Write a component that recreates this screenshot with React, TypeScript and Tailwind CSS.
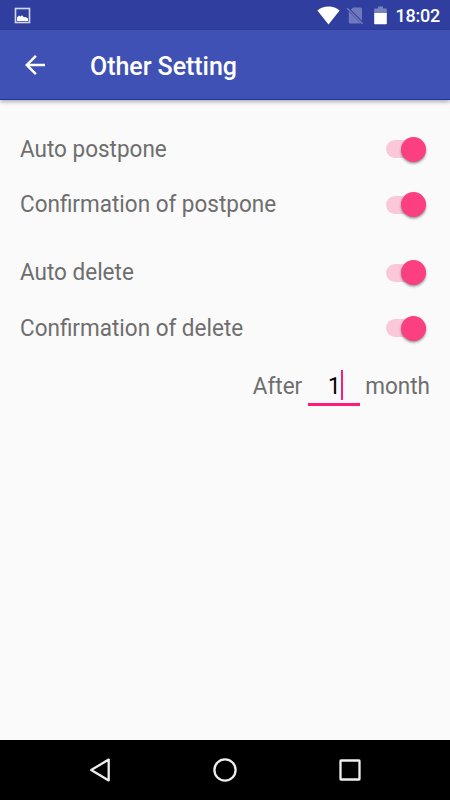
import clsx from 'clsx';

type Setting = { label: string; checked: boolean };

const postponeSettings: Setting[] = [
  { label: 'Auto postpone', checked: true },
  { label: 'Confirmation of postpone', checked: true },
];

const deleteSettings: Setting[] = [
  { label: 'Auto delete', checked: true },
  { label: 'Confirmation of delete', checked: true },
];

function StatusBar() {
  return (
    <div className="flex h-[30px] shrink-0 items-center bg-[#303f9f] pr-[10px] pl-[14px] text-white">
      <svg width="17" height="17" viewBox="0 0 17 17">
        <rect x="1.5" y="1.5" width="14" height="14" fill="none" stroke="#d3d7ee" strokeWidth="1.6" />
        <path d="M3 14v-3.500l2-2 1.500 1 1.500-1.300 2 2 1.500-.3 2.500 1.600V14z" fill="#fff" />
      </svg>
      <svg className="ml-auto" width="23" height="19" viewBox="0 0 23 19">
        <path d="M11.5 18.5L.4 4.6C3.3 2 7.2.5 11.5.5s8.2 1.5 11.1 4.1z" fill="#fff" />
      </svg>
      {/* No SIM card */}
      <svg className="ml-[6px]" width="18" height="19" viewBox="0 0 18 19">
        <path
          d="M7 1.5h7.5a1.5 1.5 0 0 1 1.5 1.5v11.7L4.8 3.6zM2.8 5.4L15 17.5H4.2A1.4 1.4 0 0 1 2.8 16z"
          fill="#7079bd"
        />
        <path d="M1.2 2.2L16.6 17.7" stroke="#7079bd" strokeWidth="1.5" />
      </svg>
      <svg className="ml-[10px]" width="13" height="19" viewBox="0 0 13 19">
        <path d="M4 .5h5v2h3q.8 0 .8.8V8H.2V3.300q0-.8.8-.8h3z" fill="#7882c1" />
        <path d="M.2 7h12.600v10.500q0 .8-.8.8H1q-.8 0-.8-.8z" fill="#fff" />
      </svg>
      <span className="ml-[9px] pt-px text-[18px] leading-[29px] font-medium tracking-[-0.25px]">18:02</span>
    </div>
  );
}

function Toolbar() {
  return (
    <header className="flex h-[70px] shrink-0 items-center border-b border-[#1c35a3] bg-[#3f51b5] pl-5 text-white shadow-[0_2px_4px_rgba(0,0,0,0.3)]">
      <svg width="30" height="30" viewBox="0 0 24 24" fill="currentColor">
        <path d="M20 11H7.830l5.590-5.590L12 4l-8 8 8 8 1.410-1.410L7.830 13H20v-2z" />
      </svg>
      <h1 className="ml-10 pt-[4px] text-[25px] leading-[30px] font-medium tracking-[-0.05px]">Other Setting</h1>
    </header>
  );
}

function Switch({ checked }: { checked: boolean }) {
  return (
    <div
      role="switch"
      aria-checked={checked}
      className={clsx('relative mb-[1px] h-[18px] w-[40px] rounded-full', checked ? 'bg-[#fbc8d9]' : 'bg-gray-300')}
    >
      <span
        className={clsx(
          'absolute -top-[3.5px] size-[25px] rounded-full shadow-[0_1.5px_2.5px_rgba(0,0,0,0.42)]',
          checked ? 'right-[0.5px] bg-[#fc3f80]' : 'left-0 bg-gray-50',
        )}
      />
    </div>
  );
}

function SettingGroup({ items }: { items: Setting[] }) {
  return (
    <div>
      {items.map((item) => (
        <div key={item.label} className="flex h-[55.3px] items-center justify-between pr-6 pl-5">
          <span className="scale-y-[1.03]">{item.label}</span>
          <Switch checked={item.checked} />
        </div>
      ))}
    </div>
  );
}

function NavigationBar() {
  return (
    <nav className="flex h-[60px] shrink-0 items-center justify-between bg-black px-[85px]">
      <svg width="30" height="30" viewBox="0 0 30 30" fill="none" stroke="#eee" strokeWidth="2.3" strokeLinejoin="round">
        <path d="M6.2 15L23.7 4.6v20.8z" />
      </svg>
      <svg width="30" height="30" viewBox="0 0 30 30" fill="none" stroke="#eee" strokeWidth="2.3">
        <circle cx="15" cy="15" r="10.6" />
      </svg>
      <svg width="30" height="30" viewBox="0 0 30 30" fill="none" stroke="#eee" strokeWidth="2.3">
        <rect x="5.5" y="5.5" width="19" height="19" rx=".5" />
      </svg>
    </nav>
  );
}

export default function App() {
  return (
    <div className="flex h-screen w-full flex-col overflow-hidden bg-[#fafafa] font-[Roboto,sans-serif]">
      <StatusBar />
      <Toolbar />
      <main className="flex-1 pt-[22.3px] text-[22.5px] text-[#6e6e6e]">
        <SettingGroup items={postponeSettings} />
        <div className="mt-[12.7px]">
          <SettingGroup items={deleteSettings} />
        </div>
        <div className="mt-[14px] flex items-start justify-end pr-5 leading-[33px]">
          <span className="scale-y-[1.03]">After</span>
          <div className="mr-[5px] ml-[6px] flex h-[35.5px] w-[52px] items-start justify-center border-b-[3px] border-[#ff1a75]">
            <span className="scale-y-[1.03] text-black">1</span>
            <span className="-mr-[2px] h-[30px] w-[2px] bg-[#ff1a75]" />
          </div>
          <span className="scale-y-[1.03]">month</span>
        </div>
      </main>
      <NavigationBar />
    </div>
  );
}
